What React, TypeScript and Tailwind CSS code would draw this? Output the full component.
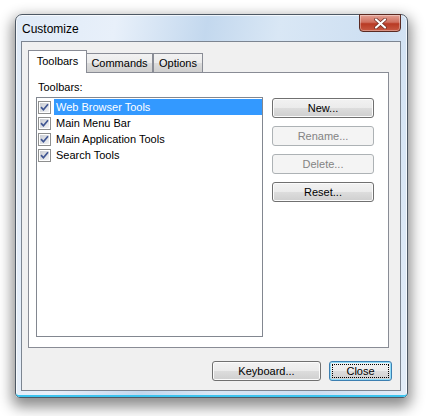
import React from "react";

const rows = ["Web Browser Tools", "Main Menu Bar", "Main Application Tools", "Search Tools"];

function Check() {
  return (
    <span className="w-[13px] h-[13px] shrink-0 border border-[#8e8f8f] bg-white p-px">
      <span className="w-full h-full flex items-center justify-center bg-[linear-gradient(135deg,#c9ccd3,#f2f3f5)]">
        <svg width="9" height="9" viewBox="0 0 9 9">
          <path d="M1 4.2 L3.4 6.8 L8 1.2" stroke="#3f5592" strokeWidth="1.7" fill="none" />
        </svg>
      </span>
    </span>
  );
}

function Btn({ label, w, disabled, focus }: { label: string; w: string; disabled?: boolean; focus?: boolean }) {
  if (disabled) {
    return (
      <div className={`${w} h-[20px] rounded-[3px] border border-[#adb2b5] bg-[#f4f4f4] flex items-center justify-center text-[#838383]`}>
        {label}
      </div>
    );
  }
  return (
    <div
      className={`${w} h-[20px] rounded-[3px] border ${focus ? "border-[#3c7fb1] shadow-[inset_0_0_0_1px_#8fdcf8]" : "border-[#707070] shadow-[inset_0_0_0_1px_#fbfbfb]"} bg-[linear-gradient(#f2f2f2,#ebebeb_50%,#dddddd_50%,#cfcfcf)] flex items-center justify-center p-[2px] text-black`}
    >
      <div className={`w-full h-full flex items-center justify-center ${focus ? "border border-dotted border-black" : ""}`}>{label}</div>
    </div>
  );
}

export default function App() {
  return (
    <div className="w-[426px] h-[416px] bg-white pl-[15px] pt-[14px] font-['Liberation_Sans',Arial,sans-serif] text-[11px] leading-[13px] text-black">
      {/* window frame */}
      <div className="w-[393px] h-[384px] rounded-t-[7px] rounded-b-[5px] border border-[#4d5864] shadow-[0_6px_14px_3px_rgba(0,0,0,0.45),inset_0_0_0_1px_rgba(255,255,255,0.7)] bg-[linear-gradient(100deg,#dfeaf7_0%,#e8f0fa_22%,#c3d8ee_42%,#d9e7f5_58%,#cddff2_80%,#e3edf8_100%)] flex flex-col">
        {/* title bar */}
        <div className="h-[26px] flex items-start justify-between pl-[6px] pr-[6px]">
          <div className="pt-[7px] text-[12px] leading-[14px] text-black">Customize</div>
          <div className="w-[42px] h-[18px] -mt-px rounded-b-[4px] border border-[#5a2a22] bg-[linear-gradient(#e4a093,#d0705f_45%,#b83a24_55%,#c85a43)] flex items-center justify-center shadow-[inset_0_0_0_1px_rgba(255,255,255,0.35)]">
            <svg width="13" height="11" viewBox="0 0 13 11">
              <path d="M2 1.5 L11 9.5 M11 1.5 L2 9.5" stroke="#6b2a20" strokeWidth="3.6" strokeLinecap="round" />
              <path d="M2 1.5 L11 9.5 M11 1.5 L2 9.5" stroke="#ffffff" strokeWidth="2.2" strokeLinecap="round" />
            </svg>
          </div>
        </div>
        {/* client area */}
        <div className="mx-[5px] w-[380px] h-[350px] border border-[#7c8591] bg-[#f0f0f0] flex flex-col pt-[8px] pl-[6px] pr-[11px]">
          {/* tab strip */}
          <div className="flex items-end h-[22px]">
            <div className="relative z-10 w-[59px] h-[23px] -mb-px border border-b-0 border-[#898c95] bg-white flex items-center justify-center pb-[2px]">
              Toolbars
            </div>
            <div className="w-[66px] h-[19px] border border-l-0 border-b-0 border-[#898c95] bg-[linear-gradient(#f2f2f2,#ebebeb_50%,#dddddd_50%,#cfcfcf)] flex items-center justify-center">
              Commands
            </div>
            <div className="w-[50px] h-[19px] border border-b-0 border-[#898c95] bg-[linear-gradient(#f2f2f2,#ebebeb_50%,#dddddd_50%,#cfcfcf)] flex items-center justify-center">
              Options
            </div>
          </div>
          {/* tab page */}
          <div className="w-[361px] h-[276px] border border-[#898c95] bg-white flex flex-col pt-[8px] pl-[7px]">
            <div className="pl-[2px]">Toolbars:</div>
            <div className="flex mt-[3px]">
              <div className="w-[227px] h-[240px] border border-[#828790] bg-white pt-px pl-px flex flex-col">
                {rows.map((r, i) => (
                  <div key={r} className="h-[16px] flex items-center">
                    <Check />
                    <div className={`ml-[3px] flex-1 h-[16px] flex items-center pl-[2px] ${i === 0 ? "bg-[#3399ff] text-white" : ""}`}>{r}</div>
                  </div>
                ))}
              </div>
              <div className="ml-[9px] pt-px flex flex-col gap-[8px]">
                <Btn label="New..." w="w-[102px]" />
                <Btn label="Rename..." w="w-[102px]" disabled />
                <Btn label="Delete..." w="w-[102px]" disabled />
                <Btn label="Reset..." w="w-[102px]" />
              </div>
            </div>
          </div>
          {/* bottom buttons */}
          <div className="mt-[13px] flex justify-end gap-[8px] -mr-[3px]">
            <Btn label="Keyboard..." w="w-[109px]" />
            <Btn label="Close" w="w-[63px]" focus />
          </div>
        </div>
        <div className="flex-1 border-b-2 border-[#3cc4ee] rounded-b-[4px]" />
      </div>
    </div>
  );
}
